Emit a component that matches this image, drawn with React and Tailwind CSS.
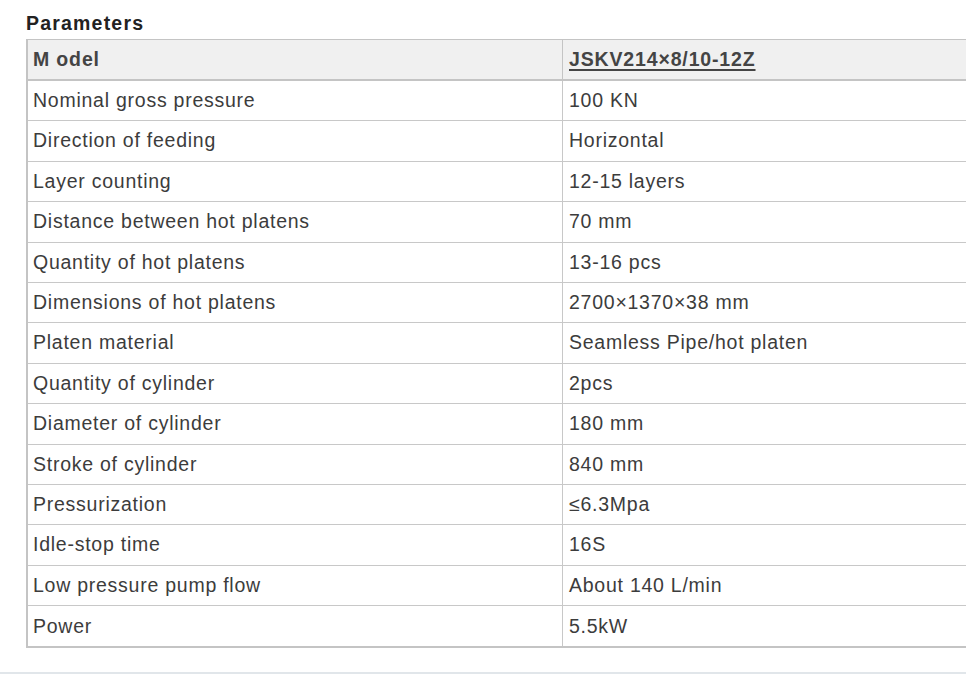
export default function App() {
  const rows = [
    ["Nominal gross pressure", "100 KN"],
    ["Direction of feeding", "Horizontal"],
    ["Layer counting", "12-15 layers"],
    ["Distance between hot platens", "70 mm"],
    ["Quantity of hot platens", "13-16 pcs"],
    ["Dimensions of hot platens", "2700×1370×38 mm"],
    ["Platen material", "Seamless Pipe/hot platen"],
    ["Quantity of cylinder", "2pcs"],
    ["Diameter of cylinder", "180 mm"],
    ["Stroke of cylinder", "840 mm"],
    ["Pressurization", "≤6.3Mpa"],
    ["Idle-stop time", "16S"],
    ["Low pressure pump flow", "About 140 L/min"],
    ["Power", "5.5kW"],
  ];
  return (
    <div
      className="w-[966px] h-[674px] bg-white overflow-hidden relative text-[#3c3c3c]"
      style={{ fontFamily: '"Liberation Sans", Arial, sans-serif' }}
    >
      <div className="pl-[26px] pt-[11px]">
        <div className="text-[19.5px] font-bold leading-[25px] text-[#222] h-[28px] tracking-[1.2px]">Parameters</div>
        <div className="w-[1000px] border-l-2 border-t border-b-2 border-[#c4c4c4]">
          <div className="flex h-[41px] bg-[#f0f0f0] border-b-2 border-[#c4c4c4] items-center font-bold text-[19.5px] tracking-[0.85px]">
            <div className="w-[535px] pl-[5px] h-full flex items-center border-r border-[#c4c4c4] text-[#444]">M odel</div>
            <div className="pl-[6px] underline decoration-2 underline-offset-[3px] text-[#444]">JSKV214×8/10-12Z</div>
          </div>
          {rows.map((r, i) => (
            <div
              key={i}
              className={`flex h-[40.4px] items-center text-[19.5px] tracking-[0.75px] ${i < rows.length - 1 ? "border-b border-[#c8c8c8]" : ""}`}
            >
              <div className="w-[535px] pl-[5px] h-full flex items-center border-r border-[#c8c8c8]">{r[0]}</div>
              <div className="pl-[6px]">{r[1]}</div>
            </div>
          ))}
        </div>
      </div>
      <div className="absolute left-0 right-0 top-[672px] h-[2px] bg-[#e1e6ea]" />
    </div>
  );
}
